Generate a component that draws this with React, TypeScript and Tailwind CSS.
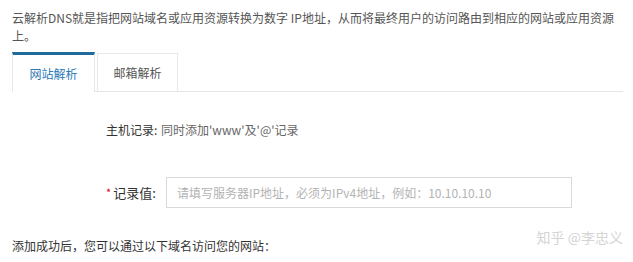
const font = "font-['Microsoft_YaHei','Noto_Sans_CJK_SC','Noto_Sans',sans-serif]";

const App = () => {
  return (
    <div className={`relative w-[633px] h-[262px] bg-white overflow-hidden ${font}`}>
      <div className="pl-3 pr-2 pt-[9px]">
        <p className="text-[12px] leading-[18px] text-[#555]">
          云解析DNS就是指把网站域名或应用资源转换为数字 IP地址，从而将最终用户的访问路由到相应的网站或应用资源上。
        </p>

        {/* tabs */}
        <div className="mt-2 flex items-end gap-[2px] border-b border-[#e6e6e6] w-[611px] h-[39px]">
          <div className="relative -mb-px flex h-[40px] w-[83px] items-center justify-center border-x border-t-[3px] border-x-[#e8e8e8] border-t-[#1e6b9c] bg-white text-[12px] text-[#2a78b5]">
            网站解析
          </div>
          <div className="flex h-[38px] w-[81px] items-center justify-center border-x border-t border-[#e8e8e8] text-[12px] text-[#555]">
            邮箱解析
          </div>
        </div>

        <div className="mt-[29px] ml-[94px] flex whitespace-nowrap text-[12px] leading-[18px]">
          <span className="w-[55px] text-[#333]">主机记录:</span>
          <span className="text-[#666]">同时添加'www'及'@'记录</span>
        </div>

        <div className="mt-[38px] ml-[94px] flex items-center">
          <div className="flex w-[60px] items-center whitespace-nowrap text-[13px] text-[#333]">
            <span className="mr-[2px] text-[11px] text-[#d9001b]">*</span>
            <span>记录值:</span>
          </div>
          <div className="flex h-[31px] w-[406px] items-center whitespace-nowrap border border-[#d9d9d9] pl-[10px] text-[12px] text-[#b3b3b3]">
            请填写服务器IP地址，必须为IPv4地址，例如：10.10.10.10
          </div>
        </div>

        <p className="mt-[29px] text-[12px] leading-[18px] text-[#333]">
          添加成功后，您可以通过以下域名访问您的网站：
        </p>
      </div>

      <div className="absolute right-[10px] top-[227px] whitespace-nowrap text-[14px] leading-[20px] text-[#d4d4d4]">
        知乎 @李忠义
      </div>
    </div>
  );
};

export default App;
